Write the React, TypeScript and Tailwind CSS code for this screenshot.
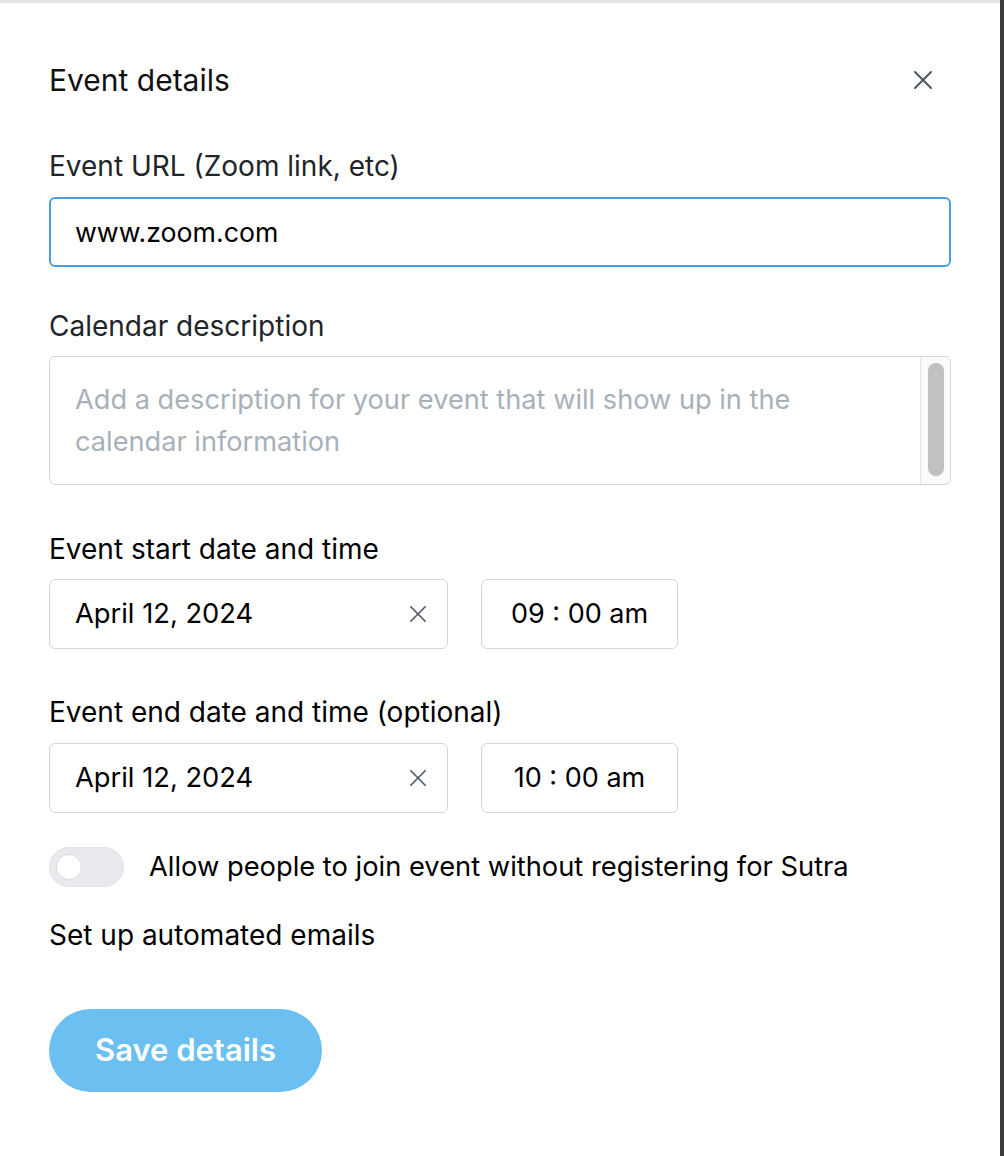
import React from "react";

function XIcon({ size, stroke }: { size: number; stroke: number }) {
  return (
    <svg width={size} height={size} viewBox="0 0 20 20" fill="none" className="text-[#4b5563]">
      <path d="M2 2L18 18M18 2L2 18" stroke="currentColor" strokeWidth={stroke} strokeLinecap="round" />
    </svg>
  );
}

function DateRow({ date, time }: { date: string; time: string }) {
  return (
    <div className="flex gap-[33px]">
      <div className="flex h-[70px] w-[399px] items-center justify-between rounded-[6px] border border-[#d1d5db] pl-[25px] pr-[20px] text-[27.3px] text-black">
        <span>{date}</span>
        <XIcon size={18} stroke={1.8} />
      </div>
      <div className="flex h-[70px] w-[197px] items-center justify-center rounded-[6px] border border-[#d1d5db] text-[27px] text-black">
        {time}
      </div>
    </div>
  );
}

export default function App() {
  return (
    <div className="flex h-[1156px] w-[1004px] bg-white" style={{ fontFamily: "Inter, 'Noto Sans', sans-serif" }}>
      <div className="flex w-[1000px] flex-col">
        <div className="h-[3px] bg-[#e2e2e2]" />
        <div className="flex flex-col px-[49px] pt-[59px]">
          <div className="flex h-[36px] items-center justify-between">
            <h1 className="text-[30px] leading-[36px] text-[#111111]">Event details</h1>
            <div className="mr-[18px]">
              <XIcon size={20} stroke={2} />
            </div>
          </div>

          <div className="mt-[50px] text-[28px] leading-[36px] text-[#212529]">Event URL (Zoom link, etc)</div>
          <div className="mt-[13px] flex h-[70px] items-center rounded-[6px] border-2 border-[#4a9fdb] pl-[24px] text-[26.7px] text-black">
            www.zoom.com
          </div>

          <div className="mt-[41px] text-[28px] leading-[36px] text-[#212529]">Calendar description</div>
          <div className="mt-[12px] flex h-[129px] overflow-hidden rounded-[6px] border border-[#d1d5db]">
            <div className="flex-1 pl-[25px] pr-[50px] pt-[22px] text-[27.2px] leading-[42px] text-[#a8b0ba]">
              Add a description for your event that will show up in the calendar information
            </div>
            <div className="flex w-[30px] justify-center border-l border-[#e6e6e6] bg-[#fafafa] pt-[6px]">
              <div className="h-[113px] w-[16px] rounded-full bg-[#c1c1c1]" />
            </div>
          </div>

          <div className="mt-[46px] text-[28px] leading-[36px] text-black">Event start date and time</div>
          <div className="mt-[12px]">
            <DateRow date="April 12, 2024" time="09 : 00 am" />
          </div>

          <div className="mt-[45px] text-[28px] leading-[36px] text-black">Event end date and time (optional)</div>
          <div className="mt-[13px]">
            <DateRow date="April 12, 2024" time="10 : 00 am" />
          </div>

          <div className="mt-[34px] flex items-center gap-[25px]">
            <div className="flex h-[40px] w-[75px] items-center rounded-full border border-[#e0e3e7] bg-[#e8eaed] pl-[6px]">
              <div className="h-[26px] w-[26px] rounded-full border border-[#d6d9dd] bg-white" />
            </div>
            <span className="text-[27.3px] leading-[36px] text-black">Allow people to join event without registering for Sutra</span>
          </div>

          <div className="mt-[30px] text-[28px] leading-[36px] text-black">Set up automated emails</div>

          <div className="mt-[56px]">
            <button className="flex h-[83px] w-[273px] items-center justify-center rounded-full bg-[#6bc0f1] text-[31px] font-semibold text-white">
              Save details
            </button>
          </div>
        </div>
      </div>
      <div className="w-[4px] bg-[#3b3b3b]" />
    </div>
  );
}
